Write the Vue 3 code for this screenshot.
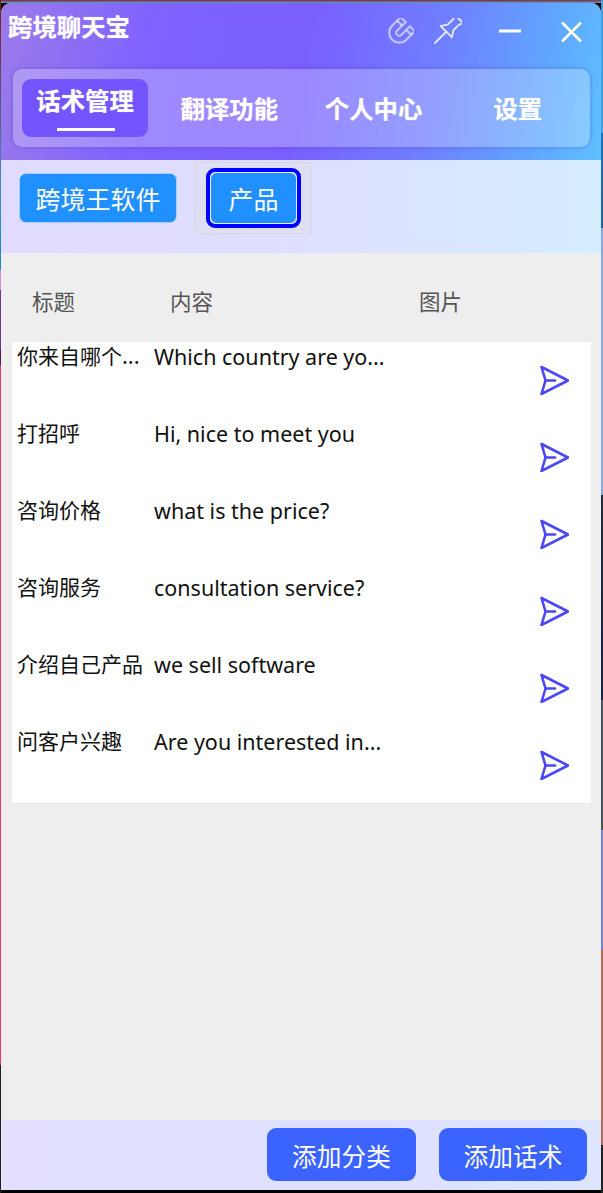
<script setup>
const tabs = [
  { name: '话术管理', active: true },
  { name: '翻译功能' },
  { name: '个人中心' },
  { name: '设置' }
]

const rows = [
  { title: '你来自哪个...', content: 'Which country are yo...' },
  { title: '打招呼', content: 'Hi, nice to meet you' },
  { title: '咨询价格', content: 'what is the price?' },
  { title: '咨询服务', content: 'consultation service?' },
  { title: '介绍自己产品', content: 'we sell software' },
  { title: '问客户兴趣', content: 'Are you interested in...' }
]
</script>

<template>
  <div class="desktop">
    <div class="window">
      <header class="header">
        <div class="titlebar">
          <div class="app-name">跨境聊天宝</div>
          <div class="win-tools">
            <svg class="tool magnet" viewBox="0 0 28 28" fill="none">
              <g transform="rotate(45 14 14)" stroke="#fff" stroke-opacity="0.55" stroke-width="2.2" stroke-linejoin="round">
                <path d="M4 3V15A10 10 0 0 0 24 15V3H17V15A3 3 0 0 1 11 15V3Z" />
                <path d="M4 8H11M17 8H24" />
              </g>
            </svg>
            <svg class="tool pin" viewBox="0 0 28 28" fill="none">
              <g transform="translate(13 13) rotate(45)" stroke="#fff" stroke-opacity="0.8" stroke-width="1.9" stroke-linejoin="round" stroke-linecap="round">
                <path d="M-6 -17H6L4 -13V-5L8 1H-8L-4 -5V-13Z" />
                <path d="M0 1V17" />
              </g>
            </svg>
            <svg class="tool minus" viewBox="0 0 24 24" fill="none">
              <path d="M1 12H23" stroke="#fff" stroke-width="3" />
            </svg>
            <svg class="tool close" viewBox="0 0 24 24" fill="none">
              <path d="M3 2.5L22 21.5M22 2.5L3 21.5" stroke="#fff" stroke-width="2.5" />
            </svg>
          </div>
        </div>
        <nav class="tabs">
          <div v-for="tab in tabs" :key="tab.name" class="tab" :class="{ active: tab.active }">
            <span>{{ tab.name }}</span>
            <i v-if="tab.active" class="tab-line"></i>
          </div>
        </nav>
      </header>

      <section class="categories">
        <button class="cat-btn first">跨境王软件</button>
        <div class="focus-box">
          <div class="focus-ring">
            <button class="cat-btn small">产品</button>
          </div>
        </div>
      </section>

      <main class="main">
        <div class="table-head">
          <span class="h-title">标题</span>
          <span class="h-content">内容</span>
          <span class="h-image">图片</span>
        </div>
        <div class="list">
          <div v-for="row in rows" :key="row.title" class="row">
            <div class="cell-title">{{ row.title }}</div>
            <div class="cell-content">{{ row.content }}</div>
            <svg class="send" viewBox="0 0 30 30" fill="none">
              <path d="M2.5 2L29 15.5L2.5 29L6.5 15.5Z" stroke="#4a48f5" stroke-width="2.6" stroke-linejoin="round" />
              <path d="M6.5 15.5H16" stroke="#4a48f5" stroke-width="2.6" stroke-linecap="round" />
            </svg>
          </div>
        </div>
      </main>

      <footer class="footer">
        <button class="add-btn">添加分类</button>
        <button class="add-btn second">添加话术</button>
      </footer>
    </div>
  </div>
</template>

<style>
html,
body {
  margin: 0;
  background: #000;
}
</style>

<style scoped>
.desktop {
  width: 603px;
  height: 1193px;
  box-sizing: border-box;
  padding: 3px 2px 3px 1px;
  overflow: hidden;
  font-family: "Noto Sans", "Noto Sans CJK SC", sans-serif;
  background:
    linear-gradient(180deg, #3fa0e0 0, #3fa0e0 133px, #1a72b8 133px, #1f5f9f 228px, #8aa8e0 228px, #8aa8e0 495px, #23303f 495px, #1b2445 700px, #4a5058 700px, #4a5058 830px, #7a80d0 830px, #7a80d0 950px, #b06a5c 950px, #b06a5c 1145px, #222 1145px) right top / 2px 100% no-repeat,
    linear-gradient(180deg, #7a2020 0, #7a2020 10px, #3a90d8 190px, #1a88c0 270px, #d88ad8 270px, #d88ad8 290px, #6a3a8a 290px, #6a3a8a 350px, #402050 350px, #402050 365px, #ee2f7a 365px, #ee2f7a 1065px, #222 1065px) left top / 1px 100% no-repeat,
    linear-gradient(180deg, #7a2a2a 0, #5f9fdc 3px, #000 3px, #000 100%);
}

.window {
  height: 1187px;
  display: flex;
  flex-direction: column;
  border-radius: 10px 10px 0 0;
  overflow: hidden;
  background: #eee;
}

.header {
  height: 157px;
  flex-shrink: 0;
  background: linear-gradient(100deg, #9a7bea 0%, #7f62ff 25%, #7a5fff 50%, #6f80ff 72%, #5fa8ff 90%, #60c0ff 100%);
}

.titlebar {
  height: 66px;
  display: flex;
  justify-content: space-between;
  padding: 0 18px 0 7px;
}

.app-name {
  margin-top: 6px;
  height: 36px;
  font-size: 24.4px;
  line-height: 36px;
  font-weight: 700;
  color: #fff;
  text-shadow: 0 0 1px rgba(255, 255, 255, 0.7);
}

.win-tools {
  display: flex;
  align-items: flex-start;
  padding-top: 15px;
}

.tool {
  display: block;
  flex-shrink: 0;
}

.magnet {
  width: 28px;
  height: 28px;
  margin-right: 20px;
}

.pin {
  width: 28px;
  height: 28px;
  margin-right: 36px;
}

.minus {
  width: 24px;
  height: 24px;
  margin-right: 37px;
  margin-top: 1px;
}

.close {
  width: 24px;
  height: 24px;
  margin-top: 2px;
}

.tabs {
  height: 78px;
  box-sizing: border-box;
  margin: 0 11px 0 12px;
  padding: 10px 0;
  display: grid;
  grid-template-columns: repeat(4, 1fr);
  border-radius: 9px;
  background: rgba(255, 255, 255, 0.25);
  box-shadow: 0 0 4px rgba(60, 40, 160, 0.35);
}

.tab {
  height: 58px;
  width: 126px;
  box-sizing: border-box;
  padding-bottom: 2px;
  justify-self: center;
  border-radius: 9px;
  display: flex;
  align-items: center;
  justify-content: center;
  position: relative;
  font-size: 24.4px;
  font-weight: 700;
  color: #fff;
  text-shadow: 0 0 1px rgba(255, 255, 255, 0.7);
}

.tab.active {
  background: #7354ff;
  padding-bottom: 18px;
}

.tab-line {
  position: absolute;
  left: 35px;
  bottom: 6px;
  width: 58px;
  height: 3px;
  background: #fff;
}

.categories {
  height: 93px;
  flex-shrink: 0;
  box-sizing: border-box;
  padding: 2px 0 0 18px;
  display: flex;
  align-items: flex-start;
  background: linear-gradient(90deg, #e1dcff 0%, #dfdeff 45%, #d5edff 100%);
}

.cat-btn {
  border: 1px solid #a8d0f5;
  border-radius: 7px;
  background: #2090ff;
  color: #fff;
  font-family: inherit;
  font-size: 25px;
  padding: 0;
}

.first {
  width: 158px;
  height: 50px;
  margin-top: 11px;
}

.focus-box {
  width: 117px;
  height: 72px;
  box-sizing: border-box;
  margin-left: 18px;
  border: 1px solid #d8d8e4;
  background: #dedeF4;
  padding: 5px 0 0 10px;
}

.focus-ring {
  width: 95px;
  height: 60px;
  box-sizing: border-box;
  border: 4px solid #0000ff;
  border-radius: 9px;
}

.small {
  display: block;
  width: 87px;
  height: 52px;
  border-color: #e4f0ff;
}

.main {
  flex: 1;
  min-height: 0;
  display: flex;
  flex-direction: column;
  background: #eee;
  padding: 0 10px 0 11px;
}

.table-head {
  height: 89px;
  flex-shrink: 0;
  box-sizing: border-box;
  padding-top: 6px;
  display: flex;
  align-items: center;
  font-size: 21.5px;
  color: #555;
  font-family: "Noto Sans CJK SC", sans-serif;
}

.h-title {
  margin-left: 20px;
  width: 138px;
}

.h-content {
  width: 249px;
}

.list {
  height: 461px;
  background: #fff;
}

.row {
  height: 77px;
  display: flex;
  align-items: flex-start;
  padding-left: 5px;
  font-size: 21.5px;
  line-height: 30px;
  color: #111;
}

.cell-title {
  width: 137px;
  flex-shrink: 0;
  margin-top: -2px;
  font-size: 21px;
  font-family: "Noto Sans CJK SC", sans-serif;
}

.cell-content {
  flex: 1;
  white-space: nowrap;
}

.send {
  display: block;
  width: 30px;
  height: 30px;
  flex-shrink: 0;
  margin: 23px 22px 0 0;
}

.footer {
  height: 70px;
  flex-shrink: 0;
  box-sizing: border-box;
  padding: 8px 14px 0 0;
  display: flex;
  justify-content: flex-end;
  gap: 23px;
  background: linear-gradient(90deg, #e2dfff 0%, #dfe0ff 60%, #dde5ff 100%);
}

.add-btn {
  width: 149px;
  height: 53px;
  border: none;
  border-radius: 9px;
  background: #3b63ff;
  color: #fff;
  font-family: inherit;
  font-size: 24.7px;
  padding: 0;
}

.second {
  width: 148px;
}
</style>
